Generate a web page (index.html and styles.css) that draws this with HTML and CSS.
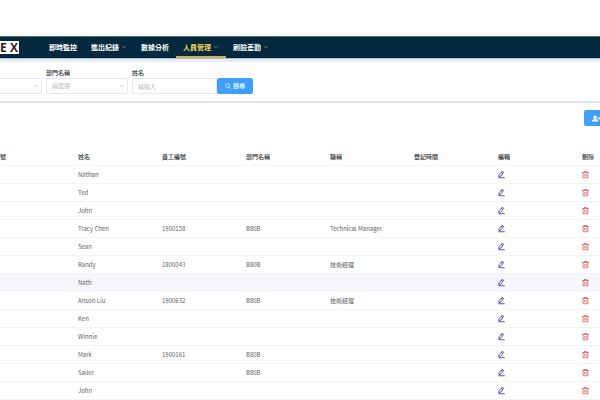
FILE: index.html
```
<!DOCTYPE html>
<html lang="zh-Hant">
<head>
<meta charset="utf-8">
<title>人員管理</title>
<link rel="stylesheet" href="styles.css">
</head>
<body>
<svg class="defs" aria-hidden="true">
  <symbol id="down" viewBox="0 0 8 8"><path d="M1.5 2.5 4 5.2 6.5 2.5" fill="none" stroke="currentColor" stroke-width="1"/></symbol>
  <symbol id="edit" viewBox="0 0 16 16"><path d="M1.5 11.8 2.4 7.4 8 0.8 11 2.6 6 10 1.5 11.8M6.4 2.8 9.6 5M1 13.5H13.5" fill="none" stroke="currentColor" stroke-width="1.7"/></symbol>
  <symbol id="trash" viewBox="0 0 16 16"><path d="M.5 3H13.5M4.4 3V1H9.6V3M2.2 3V13.5H11.8V3M5.4 6V11M8.6 6V11" fill="none" stroke="currentColor" stroke-width="1.5"/></symbol>
</svg>
<header class="topbar">
  <div class="logo"><span>E</span><span class="logo-x">X</span></div>
  <nav class="nav">
    <a href="#">即時監控</a>
    <a href="#">進出紀錄<svg><use href="#down"/></svg></a>
    <a href="#">數據分析</a>
    <a href="#" class="active">人員管理<svg><use href="#down"/></svg></a>
    <a href="#">刷臉差勤<svg><use href="#down"/></svg></a>
  </nav>
</header>
<form class="search">
  <div class="field first"><span class="select"><select aria-label="篩選"><option></option></select><svg><use href="#down"/></svg></span></div>
  <div class="field dept"><label for="dept">部門名稱</label><span class="select"><select id="dept"><option>請選擇</option></select><svg><use href="#down"/></svg></span></div>
  <div class="field name"><label for="name">姓名</label><input id="name" type="text" placeholder="請輸入"></div>
  <button type="button" class="btn submit"><svg viewBox="0 0 16 16"><path d="M10.8 10.8 15 15M12.5 7A5.5 5.5 0 1 1 1.5 7A5.5 5.5 0 1 1 12.5 7" fill="none" stroke="currentColor" stroke-width="1.7"/></svg>搜尋</button>
</form>
<main>
  <div class="tools">
    <button type="button" class="btn add" aria-label="新增人員"><svg viewBox="0 0 18 16"><circle cx="7" cy="5" r="4" fill="currentColor"/><path d="M0 15V13Q0 9.5 4 9.5H10Q14 9.5 14 13V15Z" fill="currentColor"/><path d="M12.5 7.5H20M16 4.3V10.7" stroke="currentColor" stroke-width="2"/></svg></button>
  </div>
  <table class="people">
    <thead><tr><th>號</th><th>姓名</th><th>員工編號</th><th>部門名稱</th><th>職稱</th><th>登記時間</th><th>編輯</th><th>刪除</th></tr></thead>
    <tbody id="rows"></tbody>
  </table>
</main>
<script src="app.js"></script>
</body>
</html>
```
FILE: app.js
```
const people = [
  ["Nathan"], ["Ted"], ["John"],
  ["Tracy Chen", "1900158", "B80B", "Technical Manager"],
  ["Sean"],
  ["Randy", "1800043", "B80B", "技術經理"],
  ["Nath"],
  ["Anson Liu", "1900632", "B80B", "技術經理"],
  ["Ken"], ["Winnie"],
  ["Mark", "1900161", "B80B"],
  ["Sailer", "", "B80B"],
  ["John"]
];
const icon = (name, label) =>
  `<td><button type="button" class="icon ${name}" aria-label="${label}"><svg><use href="#${name}"/></svg></button></td>`;
document.getElementById("rows").innerHTML = people.map(p => {
  const cells = [0, 1, 2, 3, 4].map(i => `<td>${p[i] || ""}</td>`).join("");
  return `<tr class="${p[0] === "Nath" ? "current" : ""}"><td></td>${cells}${icon("edit", "編輯")}${icon("trash", "刪除")}</tr>`;
}).join("");
```
FILE: styles.css
```
* { box-sizing: border-box; }
body {
  margin: 0;
  padding-top: 36px;
  height: 100vh;
  overflow: hidden;
  background: #fff;
  color: #606266;
  font: 6px/8px "Noto Sans CJK TC", sans-serif;
}
.defs { position: absolute; width: 0; height: 0; }
button, input, select { font: inherit; }

.topbar {
  display: flex;
  align-items: center;
  height: 23px;
  background: #04293f;
  border-top: 1px solid #4f6b7b;
  border-bottom: 1px solid #a9bfd4;
}
.logo {
  display: flex;
  justify-content: space-between;
  width: 19px;
  height: 13px;
  padding-right: 1px;
  background: #fff;
  color: #222;
  font: bold 12px/13px "Open Sans", sans-serif;
}
.logo-x { color: #3c1c1c; }
.nav { display: flex; align-self: stretch; padding-left: 23px; }
.nav a {
  display: flex;
  align-items: center;
  gap: 2px;
  padding: 1px 7px 0;
  color: #fff;
  font-size: 7px;
  font-weight: bold;
  text-decoration: none;
  white-space: nowrap;
  border-bottom: 2px solid transparent;
}
.nav svg { width: 6px; height: 6px; color: #6d8290; }
.nav .active { color: #f2cf57; border-bottom-color: #c9b050; }

.search {
  display: flex;
  align-items: flex-end;
  height: 44px;
  padding-bottom: 7px;
  border-top: 3px solid #e9ebf1;
  border-bottom: 2px solid #dfe2e6;
}
.field { display: flex; flex-direction: column; gap: 1px; margin-right: 4px; }
.field label { color: #303133; font-weight: 500; }
.first { width: 42px; }
.dept { width: 82px; }
.name { width: 85px; margin-right: 0; }
.select { display: flex; position: relative; }
.select svg { position: absolute; right: 3px; top: 5px; width: 6px; height: 6px; color: #c0c4cc; }
.field select, .field input {
  appearance: none;
  width: 100%;
  height: 16px;
  margin: 0;
  padding: 0 5px;
  border: 1px solid #e4e7ed;
  border-radius: 2px;
  background: #fff;
  color: #b4b8c0;
}
.first select { border-left: 0; border-radius: 0 2px 2px 0; }
.field input::placeholder { color: #b4b8c0; }
.btn {
  display: flex;
  align-items: center;
  justify-content: center;
  gap: 2px;
  height: 16px;
  padding: 0;
  border: 0;
  border-radius: 2px;
  background: #409eff;
  color: #fff;
}
.submit { width: 36px; font-weight: 500; }
.submit svg { width: 6px; height: 6px; }

.tools { display: flex; justify-content: flex-end; padding: 7px 0 22px; }
.add { width: 16px; justify-content: flex-end; border-radius: 2px 0 0 2px; }
.add svg { width: 8px; height: 7px; }

.people { width: 100%; table-layout: fixed; border-collapse: separate; border-spacing: 0; }
.people th, .people td {
  width: 14%;
  height: 18px;
  padding: 0;
  text-align: left;
  white-space: nowrap;
  border-bottom: 1px solid #f3f4f8;
}
.people th { color: #303133; font-weight: 500; }
.people th:first-child { width: 13%; }
.people th:last-child { width: 3%; }
.current { background: #f5f7fa; }
.icon { display: block; padding: 0; border: 0; background: none; }
.icon svg { display: block; width: 8px; height: 8px; }
.edit { color: #4338b5; }
.trash { color: #d3504f; }
```
